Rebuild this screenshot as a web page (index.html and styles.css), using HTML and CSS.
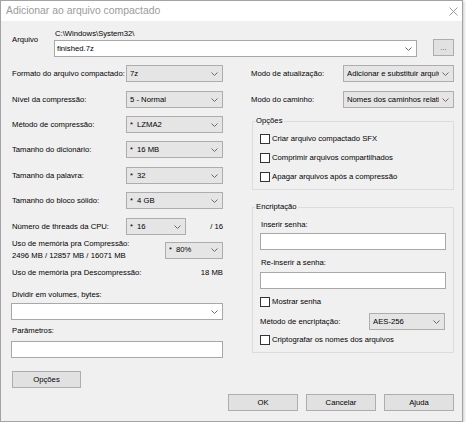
FILE: index.html
```html
<!DOCTYPE html>
<html>
<head>
<meta charset="utf-8">
<title>Adicionar ao arquivo compactado</title>
<link rel="stylesheet" href="styles.css">
</head>
<body>
<div class="window">
  <div class="titlebar">
    <span class="title">Adicionar ao arquivo compactado</span>
    <svg class="close" width="9" height="9" viewBox="0 0 9 9"><path d="M0.5 0.5 L8.5 8.5 M8.5 0.5 L0.5 8.5" stroke="#9a9a9a" stroke-width="1" fill="none"/></svg>
  </div>
  <div class="content">
    <div class="file-row">
      <div class="file-label">Arquivo</div>
      <div class="file-main">
        <div class="path">C:\Windows\System32\</div>
        <div class="combo edit file-combo"><span class="val">finished.7z</span><svg class="chev" width="7" height="4" viewBox="0 0 7 4"><polyline points="0.5,0.5 3.5,3.5 6.5,0.5" fill="none" stroke="#6a6a6a" stroke-width="1"/></svg></div>
      </div>
      <div class="btn browse">...</div>
    </div>

    <div class="columns">
      <div class="left">
        <div class="row">
          <span class="lbl">Formato do arquivo compactado:</span>
          <div class="combo w97"><span class="val">7z</span><svg class="chev" width="7" height="4" viewBox="0 0 7 4"><polyline points="0.5,0.5 3.5,3.5 6.5,0.5" fill="none" stroke="#6a6a6a" stroke-width="1"/></svg></div>
        </div>
        <div class="row m9">
          <span class="lbl">Nível da compressão:</span>
          <div class="combo w97"><span class="val">5 - Normal</span><svg class="chev" width="7" height="4" viewBox="0 0 7 4"><polyline points="0.5,0.5 3.5,3.5 6.5,0.5" fill="none" stroke="#6a6a6a" stroke-width="1"/></svg></div>
        </div>
        <div class="row m8">
          <span class="lbl">Método de compressão:</span>
          <div class="combo w97"><span class="val"><span class="ast">*</span>LZMA2</span><svg class="chev" width="7" height="4" viewBox="0 0 7 4"><polyline points="0.5,0.5 3.5,3.5 6.5,0.5" fill="none" stroke="#6a6a6a" stroke-width="1"/></svg></div>
        </div>
        <div class="row m8">
          <span class="lbl">Tamanho do dicionário:</span>
          <div class="combo w97"><span class="val"><span class="ast">*</span>16 MB</span><svg class="chev" width="7" height="4" viewBox="0 0 7 4"><polyline points="0.5,0.5 3.5,3.5 6.5,0.5" fill="none" stroke="#6a6a6a" stroke-width="1"/></svg></div>
        </div>
        <div class="row m9">
          <span class="lbl">Tamanho da palavra:</span>
          <div class="combo w97"><span class="val"><span class="ast">*</span>32</span><svg class="chev" width="7" height="4" viewBox="0 0 7 4"><polyline points="0.5,0.5 3.5,3.5 6.5,0.5" fill="none" stroke="#6a6a6a" stroke-width="1"/></svg></div>
        </div>
        <div class="row m8">
          <span class="lbl">Tamanho do bloco sólido:</span>
          <div class="combo w97"><span class="val"><span class="ast">*</span>4 GB</span><svg class="chev" width="7" height="4" viewBox="0 0 7 4"><polyline points="0.5,0.5 3.5,3.5 6.5,0.5" fill="none" stroke="#6a6a6a" stroke-width="1"/></svg></div>
        </div>
        <div class="row m9">
          <span class="lbl">Número de threads da CPU:</span>
          <div class="combo w60"><span class="val"><span class="ast">*</span>16</span><svg class="chev" width="7" height="4" viewBox="0 0 7 4"><polyline points="0.5,0.5 3.5,3.5 6.5,0.5" fill="none" stroke="#6a6a6a" stroke-width="1"/></svg></div>
          <span class="of">/ 16</span>
        </div>
        <div class="mem-row">
          <div class="mem-lbl">Uso de memória pra Compressão:<br>2496 MB / 12857 MB / 16071 MB</div>
          <div class="combo w58"><span class="val"><span class="ast">*</span>80%</span><svg class="chev" width="7" height="4" viewBox="0 0 7 4"><polyline points="0.5,0.5 3.5,3.5 6.5,0.5" fill="none" stroke="#6a6a6a" stroke-width="1"/></svg></div>
        </div>
        <div class="decomp-row">
          <span class="lbl-plain">Uso de memória pra Descompressão:</span>
          <span>18 MB</span>
        </div>
        <div class="lbl-line split-lbl">Dividir em volumes, bytes:</div>
        <div class="combo edit full split-combo"><span class="val"></span><svg class="chev" width="7" height="4" viewBox="0 0 7 4"><polyline points="0.5,0.5 3.5,3.5 6.5,0.5" fill="none" stroke="#6a6a6a" stroke-width="1"/></svg></div>
        <div class="lbl-line param-lbl">Parâmetros:</div>
        <div class="input full param-input"></div>
        <div class="btn opts-btn">Opções</div>
      </div>

      <div class="right">
        <div class="rrow">
          <span class="rlbl">Modo de atualização:</span>
          <div class="combo w111"><span class="val">Adicionar e substituir arquivos</span><svg class="chev" width="7" height="4" viewBox="0 0 7 4"><polyline points="0.5,0.5 3.5,3.5 6.5,0.5" fill="none" stroke="#6a6a6a" stroke-width="1"/></svg></div>
        </div>
        <div class="rrow m9">
          <span class="rlbl">Modo do caminho:</span>
          <div class="combo w111"><span class="val">Nomes dos caminhos relativos</span><svg class="chev" width="7" height="4" viewBox="0 0 7 4"><polyline points="0.5,0.5 3.5,3.5 6.5,0.5" fill="none" stroke="#6a6a6a" stroke-width="1"/></svg></div>
        </div>

        <fieldset class="group opts-group">
          <legend>Opções</legend>
          <div class="check first"><span class="cb"></span>Criar arquivo compactado SFX</div>
          <div class="check"><span class="cb"></span>Comprimir arquivos compartilhados</div>
          <div class="check"><span class="cb"></span>Apagar arquivos após a compressão</div>
        </fieldset>

        <fieldset class="group enc-group">
          <legend>Encriptação</legend>
          <div class="lbl-line pw1">Inserir senha:</div>
          <div class="input pw-input in1"></div>
          <div class="lbl-line pw2">Re-inserir a senha:</div>
          <div class="input pw-input in2"></div>
          <div class="check show"><span class="cb"></span>Mostrar senha</div>
          <div class="enc-row">
            <span class="enc-lbl">Método de encriptação:</span>
            <div class="combo w76"><span class="val">AES-256</span><svg class="chev" width="7" height="4" viewBox="0 0 7 4"><polyline points="0.5,0.5 3.5,3.5 6.5,0.5" fill="none" stroke="#6a6a6a" stroke-width="1"/></svg></div>
          </div>
          <div class="check crypt"><span class="cb"></span>Criptografar os nomes dos arquivos</div>
        </fieldset>
      </div>
    </div>

    <div class="buttons">
      <div class="btn dlg">OK</div>
      <div class="btn dlg">Cancelar</div>
      <div class="btn dlg">Ajuda</div>
    </div>
  </div>
</div>
</body>
</html>
```

FILE: styles.css
```css
html, body {
  margin: 0;
  padding: 0;
  background: #ffffff;
}

body {
  font-family: "Liberation Sans", Arial, sans-serif;
}

.window {
  width: 463px;
  height: 422px;
  box-sizing: border-box;
  border: 1px solid #a3a3a3;
  background: #f0f0f0;
  box-shadow: 1px 1px 3px rgba(0, 0, 0, 0.22);
  display: flex;
  flex-direction: column;
}

.titlebar {
  height: 20px;
  flex: 0 0 20px;
  background: #ffffff;
  display: flex;
  align-items: center;
  justify-content: space-between;
  padding: 0 4px 0 5px;
}

.title {
  font-size: 10.4px;
  color: #9b9b9b;
  line-height: 12px;
}

.close {
  display: block;
}

.content {
  padding: 0 8px 0 10px;
  font-size: 7.7px;
  line-height: 12px;
  color: #000000;
}

/* file row */
.file-row {
  display: flex;
  margin-top: 7px;
}

.file-label {
  width: 42px;
  padding-left: 1px;
  margin-top: 6px;
}

.file-main {
  width: 363px;
}

.path {
  padding-left: 1px;
  height: 12px;
}

.file-combo {
  height: 17px;
}

.browse {
  margin-left: 16px;
  width: 21px;
  height: 17px;
  align-self: flex-end;
  margin-bottom: 1px;
  color: #555;
}

/* generic controls */
.combo {
  box-sizing: border-box;
  height: 17px;
  border: 1px solid #adadad;
  background: #e5e5e5;
  display: flex;
  align-items: center;
  justify-content: space-between;
  padding-left: 3px;
  overflow: hidden;
  white-space: nowrap;
}

.combo.edit {
  background: #ffffff;
  border-color: #a8a8a8;
  padding-left: 2px;
}

.combo .val {
  overflow: hidden;
  white-space: nowrap;
  flex: 1 1 auto;
  min-width: 0;
}

.chev {
  flex: 0 0 7px;
  margin: 0 4px 0 3px;
  display: block;
}

.ast {
  display: inline-block;
  width: 7px;
}

.input {
  box-sizing: border-box;
  height: 17px;
  border: 1px solid #a8a8a8;
  background: #ffffff;
}

.btn {
  box-sizing: border-box;
  border: 1px solid #adadad;
  background: #e1e1e1;
  display: flex;
  align-items: center;
  justify-content: center;
}

.w97 { width: 97px; }
.w60 { width: 60px; }
.w58 { width: 58px; }
.w111 { width: 111px; }
.w76 { width: 76px; }
.full { width: 212px; }

.m8 { margin-top: 8px; }
.m9 { margin-top: 9px; }

/* columns */
.columns {
  display: flex;
  gap: 28px;
  margin-top: 8px;
}

.left {
  width: 212px;
  display: flex;
  flex-direction: column;
}

.row {
  display: flex;
  align-items: center;
  height: 17px;
}

.lbl {
  flex: 0 0 114px;
  padding-left: 1px;
  white-space: nowrap;
}

.of {
  margin-left: auto;
}

.mem-row {
  display: flex;
  align-items: center;
  justify-content: space-between;
  margin-top: 3px;
  height: 24px;
}

.mem-lbl {
  padding-left: 1px;
  white-space: nowrap;
}

.decomp-row {
  display: flex;
  justify-content: space-between;
  margin-top: 5px;
  padding-left: 1px;
}

.lbl-line {
  padding-left: 1px;
  height: 12px;
}

.split-lbl { margin-top: 10px; }
.split-combo { margin-top: 2px; }
.param-lbl { margin-top: 5px; }
.param-input { margin-top: 4px; }

.opts-btn {
  margin-top: 13px;
  margin-left: 1px;
  width: 69px;
  height: 17px;
}

/* right column */
.right {
  width: 203px;
  display: flex;
  flex-direction: column;
}

.rrow {
  display: flex;
  align-items: center;
  height: 17px;
}

.rlbl {
  flex: 0 0 92px;
  white-space: nowrap;
}

.group {
  margin: 0 0 0 1px;
  padding: 0 8px 0 7px;
  border: 1px solid #dcdcdc;
  min-width: 0;
  width: 202px;
  box-sizing: border-box;
}

.group legend {
  padding: 0 1px;
  margin-left: -5px;
  line-height: 12px;
}

.opts-group {
  margin-top: 7px;
  padding-bottom: 6px;
}

.check {
  display: flex;
  align-items: center;
  height: 12px;
  margin-top: 7px;
  white-space: nowrap;
}

.check.first { margin-top: 6px; }

.cb {
  box-sizing: border-box;
  width: 10px;
  height: 10px;
  border: 1px solid #333333;
  background: #ffffff;
  margin-right: 2px;
  flex: 0 0 10px;
}

.enc-group {
  margin-top: 11px;
  padding-bottom: 6px;
}

.pw1 { margin-top: 6px; }
.in1 { margin-top: 2px; }
.pw2 { margin-top: 7px; }
.in2 { margin-top: 3px; }
.pw-input { width: 186px; }

.check.show { margin-top: 7px; }

.enc-row {
  display: flex;
  align-items: center;
  height: 17px;
  margin-top: 5px;
}

.enc-lbl {
  flex: 0 0 109px;
  white-space: nowrap;
}

.check.crypt { margin-top: 4px; }

/* bottom buttons */
.buttons {
  display: flex;
  justify-content: flex-end;
  gap: 8px;
  margin-top: 6px;
}

.dlg {
  width: 70px;
  height: 17px;
}
```
